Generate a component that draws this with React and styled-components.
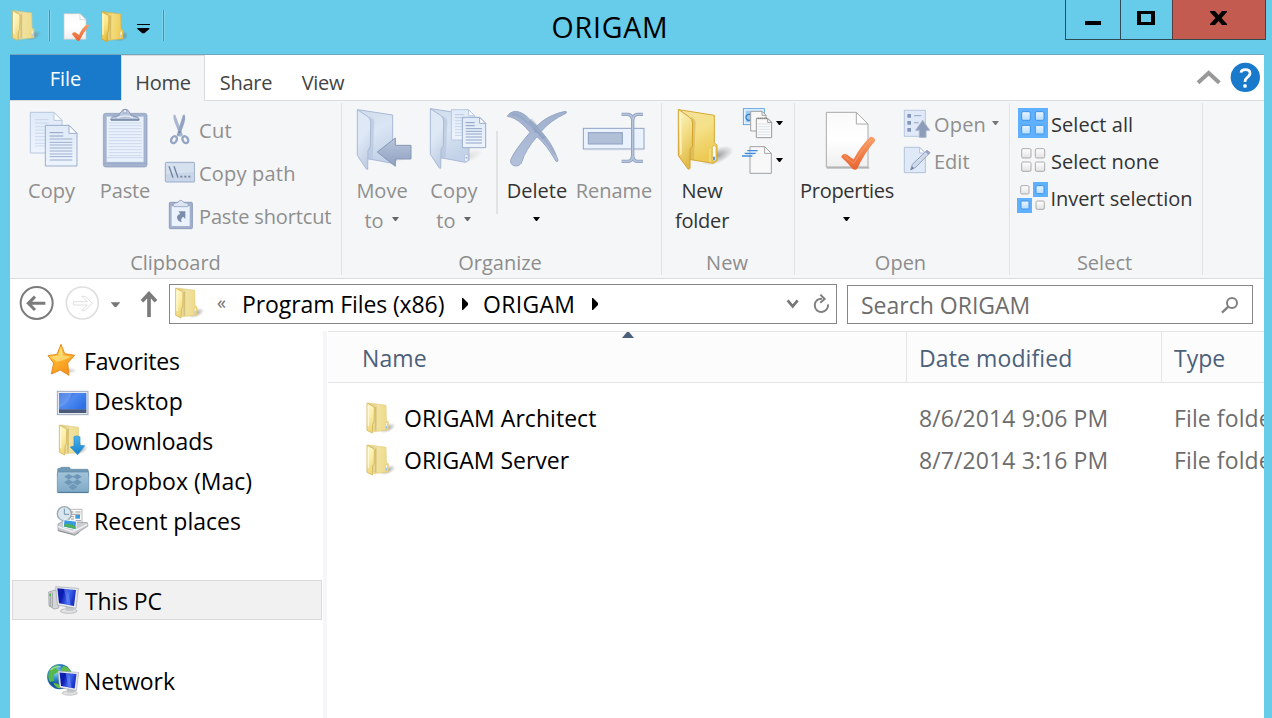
import React from "react";
import styled, { createGlobalStyle } from "styled-components";

const Global = createGlobalStyle`
  * { box-sizing: border-box; }
  body { margin: 0; overflow: hidden; background: #67cbea; font: 20px "Open Sans", "Noto Sans", sans-serif; color: #000; }
`;

/* ---------- frame ---------- */
const Window = styled.div`
  width: 1272px; height: 718px; background: #67cbea; overflow: hidden;
  display: flex; flex-direction: column;
`;
const TitleBar = styled.header`
  height: 54px; flex: none; display: flex; align-items: flex-start;
`;
const QuickAccess = styled.div`display: flex; width: 549px; height: 54px; padding-left: 11px;`;
const QuickSeparator = styled.i`
  width: 3px; height: 31px; margin-top: 10px; background: #4590ab; border: solid #7fd6f0; border-width: 0 1px;
`;
const Title = styled.div`
  width: 122px; text-align: center; font-size: 28.5px; line-height: 54px; letter-spacing: 0.8px; white-space: nowrap;
`;
const Controls = styled.div`
  margin-left: auto; margin-right: 6px; display: flex; height: 40px;
  border: solid #2e4a55; border-width: 0 1px 1px;
`;
const Control = styled.button`
  width: ${(p) => p.$w}px; padding: 0; border: 0; border-left: ${(p) => (p.$first ? 0 : 1)}px solid ${(p) => (p.$close ? "#5b3c3c" : "#2e4a55")};
  background: ${(p) => (p.$close ? "#c35b51" : "transparent")};
`;
const Client = styled.main`
  flex: 1; margin: 0 8px 0 10px; background: #fff; border-top: 1px solid #74a5bd;
  display: flex; flex-direction: column; min-height: 0; overflow: hidden;
`;

/* ---------- tabs ---------- */
const Tabs = styled.nav`
  height: 46px; flex: none; display: flex; border-bottom: 1px solid #dadbdc; color: #444;
`;
const FileTab = styled.div`
  width: 111px; height: 45px; background: #1979ca; color: #fff; text-align: center; line-height: 48px;
`;
const Tab = styled.div`
  width: ${(p) => p.$w}px; height: 46px; text-align: center; line-height: 55px; letter-spacing: -0.3px; margin-left: ${(p) => p.$ml || 0}px;
  ${(p) => p.$active && "background: #f5f6f7; border: solid #dadbdc; border-width: 1px 1px 0; line-height: 53px;"}
`;
const TabTools = styled.div`margin-left: auto; display: flex;`;

/* ---------- ribbon ---------- */
const Ribbon = styled.section`
  height: 178px; flex: none; display: flex; background: #f5f6f7; border-bottom: 1px solid #dadbdc; padding-top: 2px;
`;
const Group = styled.div`
  width: ${(p) => p.$w}px; height: 172px; border-right: 1px solid #e2e3e4; display: flex; flex-direction: column;
`;
const GroupBody = styled.div`height: 145px; flex: none; display: flex; padding-left: ${(p) => p.$pl}px;`;
const GroupLabel = styled.div`
  text-align: center; color: #8d8d8d; line-height: 30px; padding-right: ${(p) => p.$pr || 0}px;
`;
const BigButton = styled.div`
  width: ${(p) => p.$w}px; flex: none; display: flex; flex-direction: column; align-items: center;
  color: ${(p) => (p.$off ? "#8f8f8f" : "#333")}; line-height: 30px; letter-spacing: ${(p) => p.$ls || 0}px; white-space: nowrap;
  padding-top: 1px;
`;
const ButtonLine = styled.div`
  display: flex; align-items: center; height: 30px; gap: 8px;
  svg + & { margin-top: 2px; }
  svg { margin-bottom: 4px; }
`;
const SmallColumn = styled.div`display: flex; flex-direction: column; padding-top: ${(p) => p.$pt}px;`;
const SmallRow = styled.div`
  height: ${(p) => p.$h}px; display: flex; align-items: center; white-space: nowrap;
  color: ${(p) => (p.$off ? "#8f8f8f" : "#333")}; letter-spacing: ${(p) => p.$ls || 0}px;
`;
const SmallLabel = styled.span`margin-left: ${(p) => p.$ml}px; line-height: 30px;`;
const InnerSeparator = styled.i`width: 2px; height: 83px; background: #e1e2e4; margin: 28px 2px 0 7px;`;
const Art = styled.svg`display: block; flex: none;`;

/* ---------- address bar ---------- */
const AddressRow = styled.div`height: 52px; flex: none; display: flex;`;
const AddressBox = styled.div`
  width: 668px; height: 40px; margin: 5px 0 0 1px; border: 1px solid #868686; display: flex; align-items: center;
  font-size: 23px; line-height: 38px; white-space: nowrap;
`;
const Chevrons = styled.span`font-size: 18px; color: #6d6d6d; margin: -4px 15px 0 13px; width: 10px;`;
const Crumb = styled.span`width: ${(p) => p.$w}px; letter-spacing: ${(p) => p.$ls || 0}px;`;
const SearchBox = styled.div`
  width: 406px; height: 39px; margin: 6px 0 0 10px; border: 1px solid #868686; padding: 0 13px;
  display: flex; justify-content: space-between; align-items: center; font-size: 23px; line-height: 38px; color: #6d6d6d;
`;

/* ---------- body ---------- */
const Body = styled.div`flex: 1; display: flex; min-height: 0; min-width: 0;`;
const NavPane = styled.aside`
  width: 317px; flex: none; border-right: 4px solid #f5f6f7; padding: 9px 0 0 2px; font-size: 23px;
`;
const NavItem = styled.div`
  width: 310px; height: 40px; display: flex; padding-left: ${(p) => (p.$child ? 43 : 33)}px; margin-top: ${(p) => p.$mt || 0}px;
  ${(p) => p.$selected && "background: #f1f1f1; box-shadow: inset 0 0 0 1px #d9d9d9;"}
`;
const NavLabel = styled.span`
  margin-left: ${(p) => p.$ml ?? 2}px; line-height: 40px; padding-top: 1px; white-space: nowrap; letter-spacing: ${(p) => p.$ls || 0}px;
`;
const Files = styled.section`flex: 1; min-width: 0; overflow: hidden; margin-left: 1px;`;
const Columns = styled.div`
  display: grid; grid-template-columns: 579px 255px 103px; font-size: 23px; white-space: nowrap;
`;
const HeaderRow = styled(Columns)`
  height: 52px; border: solid #e5e5e5; border-width: 1px 0; background: #fcfcfc; color: #4c607a;
`;
const HeaderCell = styled.div`
  position: relative; border-right: 1px solid #e5e5e5; height: 50px; line-height: 53px; padding-left: ${(p) => p.$pl}px; letter-spacing: ${(p) => p.$ls || 0}px;
`;
const SortArrow = styled.svg`position: absolute; left: 294px; top: 0;`;
const FileList = styled.div`padding-top: 14px;`;
const FileRow = styled(Columns)`height: 42px; line-height: 42px;`;
const NameCell = styled.div`display: flex; align-items: center; padding-left: 38px;`;
const FileName = styled.span`margin-left: 8px; letter-spacing: ${(p) => p.$ls || 0}px;`;
const Cell = styled.div`color: #6d6d6d; padding-left: 12px; letter-spacing: ${(p) => p.$ls || 0}px;`;

/* ---------- shared drawing pieces ---------- */
const DefsSvg = styled.svg`position: absolute; width: 0; height: 0;`;
const grad = (id, stops, x2 = 0, y2 = 1) => (
  <linearGradient id={id} x1="0" y1="0" x2={x2} y2={y2}>
    {stops.map((c, i) => <stop key={i} offset={i / (stops.length - 1)} stopColor={c} />)}
  </linearGradient>
);
const Defs = () => (
  <DefsSvg>
    <defs>
      {grad("yBack", ["#f3e2a0", "#f5e188", "#ecca55"], 0.4)}
      {grad("yFlap", ["#fdf6c8", "#f3de86", "#e2bd4a"], 0.3)}
      {grad("yBackL", ["#d9c583", "#f0e2a0", "#efda88"], 1, 0.1)}
      {grad("yBackD", ["#d3b45a", "#f3dc80", "#efcc55"], 1, 0.1)}
      {grad("yFlapS", ["#fff8c4", "#fbeea6", "#efd77c"], 0.2)}
      {grad("yFlapD", ["#fff3b4", "#fae585", "#e6bf45"], 0.2)}
      {grad("gBack", ["#cfdbeb", "#dbe6f4", "#c3d2e8"], 0.4)}
      {grad("gFlap", ["#dfe9f6", "#dfe9f6", "#c3d0e5"], 0.3)}
      {grad("gDark", ["#b9c6dc", "#8fa0c0"])}
      {grad("gMid", ["#9fb0ce", "#b3c1da"])}
      {grad("gPage", ["#dfeaf8", "#edf4fe"])}
      {grad("wPage", ["#fafafa", "#ffffff", "#efefef"])}
      {grad("orange", ["#f9a06a", "#e9632f"])}
      {grad("scr", ["#1426a8", "#0a19b0", "#3d66ee", "#1a2fc4"], 1, 0.3)}
      {grad("desk", ["#2b62d6", "#4f8af0", "#2e70e6"], 1, 0.6)}
      {grad("star", ["#ffe66c", "#fcb32a", "#f6921e"], 0.6)}
      {grad("dl", ["#4bb5ee", "#1580cc"])}
      {grad("dbx", ["#a4c5da", "#7fa9c6"])}
      {grad("selB", ["#eaf5ff", "#b4dcff"])}
      {grad("selG", ["#ffffff", "#e2e2e2"])}
      <radialGradient id="shade"><stop offset="0" stopColor="#777" stopOpacity=".7" /><stop offset="1" stopColor="#777" stopOpacity="0" /></radialGradient>
      <radialGradient id="globe" cx=".35" cy=".3"><stop offset="0" stopColor="#9fdcf8" /><stop offset=".6" stopColor="#2a86d0" /><stop offset="1" stopColor="#14529c" /></radialGradient>
    </defs>
  </DefsSvg>
);

const SmallFolder = ({ dark }) => (
  <g>
    <ellipse cx="200" cy="452" rx="26" ry="13" transform="rotate(-22 200 452)" fill="url(#shade)" />
    <path d="M142 377 L196 384 L197 429 L203 433 V458 L158 463 Z" fill={dark ? "url(#yBackD)" : "url(#yBackL)"} stroke={dark ? "#dcb440" : "#e2cb78"} strokeWidth="2" />
    <path d="M165 388 V460" stroke="#b3954a" strokeWidth="5" opacity=".4" />
    <path d="M139 377 L157 387 Q161 389 161 394 L160 434 L156 440 L155 467 L139 459 Z" fill={dark ? "url(#yFlapD)" : "url(#yFlapS)"} stroke={dark ? "#cfa42e" : "#d4b65c"} strokeWidth="2.500" />
    <path d="M143 386 V446" stroke="#fffce8" strokeWidth="4" opacity=".8" />
    <rect x="194.500" y="436" width="5.500" height="19" rx="2" fill="#fff" stroke="#dcb944" strokeWidth="1.500" />
    <path d="M197.500 446 V454" stroke="#7fb2ea" strokeWidth="2.500" />
  </g>
);
const FolderIcon = ({ dark, w = 30 }) => (
  <Art width={w} height="33" viewBox={`136 374 ${w * 3} 99`}><SmallFolder dark={dark} /></Art>
);

const Down = ({ c = "#000", w = 8 }) => (
  <Art width={w} height="4" viewBox={`0 0 ${w} 4`}><path d="M0 0H7L4 4H3Z" fill={c} /></Art>
);

/* folded-corner page */
const Page = ({ x, y, w, h, f = 24, fill = "url(#gPage)", stroke = "#a9b9d4", fold = "#fff", sw = 3 }) => (
  <g strokeWidth={sw} stroke={stroke}>
    <path d={`M${x} ${y}H${x + w - f}L${x + w} ${y + f}V${y + h}H${x}Z`} fill={fill} />
    <path d={`M${x + w - f} ${y}V${y + f}H${x + w}Z`} fill={fold} strokeLinejoin="round" />
  </g>
);
const Lines = ({ x, x2, ys, c = "#9aa9c6", sw = 3 }) => (
  <path d={ys.map((y) => `M${x} ${y}H${x2}`).join("")} stroke={c} strokeWidth={sw} />
);

/* ---------- big ribbon icons ---------- */
const CopyArt = () => (
  <Art width="73" height="70" viewBox="15 12 219 210">
    <Page x={61} y={37} w={95} h={122} stroke="#b8c8e0" />
    <Lines x={75} x2={116} ys={[59, 69]} c="#c9d6e8" />
    <Lines x={75} x2={140} ys={[80, 90, 100, 110, 120, 130, 138]} c="#cddaec" />
    <Page x={106} y={76} w={95} h={122} stroke="#9badcc" />
    <Lines x={119} x2={160} ys={[98, 108]} c="#8fa0c2" />
    <Lines x={119} x2={187} ys={[117, 127, 135, 144, 153, 162, 170, 180]} c="#9cadcc" />
  </Art>
);
const PasteArt = () => (
  <Art width="74" height="70" viewBox="234 12 222 210">
    <rect x="280" y="40" width="131" height="161" rx="7" fill="#a5b3cf" stroke="#8a9bbd" strokeWidth="2" />
    <path d="M281 190H410" stroke="#8fa0c0" strokeWidth="2" />
    <rect x="290" y="50" width="111" height="136" fill="#e9f1fc" stroke="#bccbe1" strokeWidth="1.500" />
    <Lines x={296} x2={395} ys={[69, 77, 86, 95, 104, 113, 122, 131, 140, 149, 158, 167]} c="#c6d4e7" sw={2.5} />
    <path d="M291 173H400" stroke="#b9c9df" strokeWidth="2" />
    <path d="M302 60Q302 50 316 49L326 47Q328 39 334 35A12 10 0 0 1 357 35Q361 42 366 48L378 50Q388 52 388 60Z" fill="#b8c4da" stroke="#7f90b2" strokeWidth="2.500" />
    <circle cx="345" cy="34" r="5" fill="#f5f6f7" stroke="#7f90b2" strokeWidth="2" />
    <path d="M303 60H387" stroke="#73859f" strokeWidth="4" />
    <path d="M322 53Q345 42 370 53" stroke="#e7eef8" strokeWidth="4" fill="none" />
  </Art>
);
const GhostFolder = ({ dx = 0, dy = 0 }) => (
  <g transform={`translate(${dx} ${dy})`}>
    <ellipse cx="168" cy="172" rx="46" ry="18" transform="rotate(-20 168 172)" fill="url(#shade)" opacity=".25" />
    <path d="M53 29L158 45V131L168 138V183L158 190L82 176Z" fill="url(#gBack)" stroke="#a9bad6" strokeWidth="3" />
    <path d="M88 50Q102 55 103 68L98 180L84 178Z" fill="#b3c2da" opacity=".6" />
    <path d="M52 29L84 50Q92 56 92 66L91 140L84 152L83 208L79 207L52 166Z" fill="url(#gFlap)" stroke="#a9bad6" strokeWidth="3" />
  </g>
);
const MoveToArt = () => (
  <Art width="74" height="70" viewBox="15 12 222 210">
    <GhostFolder />
    <path d="M112 156L166 114V136H213V177H166V199Z" fill="url(#gDark)" stroke="#8797b6" strokeWidth="3" strokeLinejoin="round" />
  </Art>
);
const CopyToArt = () => (
  <Art width="70" height="70" viewBox="237 12 210 210">
    <GhostFolder dx={219} dy={-3} />
    <Page x={334} y={29} w={70} h={91} f={18} stroke="#b8c8e0" />
    <Lines x={345} x2={372} ys={[44, 53]} c="#bccade" />
    <Lines x={345} x2={392} ys={[62, 71, 80, 89, 98, 106]} c="#cad7e9" />
    <Page x={367} y={52} w={70} h={91} f={18} stroke="#98abcb" />
    <Lines x={377} x2={404} ys={[68, 77]} c="#8c9ec0" />
    <Lines x={377} x2={426} ys={[86, 94, 102, 111, 120, 129]} c="#92a4c5" />
    <rect x="374" y="164" width="10" height="20" rx="3" fill="#f2f6fc" stroke="#a9bad6" strokeWidth="2" />
    <circle cx="379" cy="173" r="3" fill="#a3b4d0" />
  </Art>
);
const DeleteArt = () => (
  <Art width="74" height="70" viewBox="480 12 222 210">
    <path d="M502 49Q508 36 527 34Q550 36 570 59Q580 69 590 78Q625 44 675 34Q682 34 678 40Q630 62 603 95Q634 124 654 180Q655 186 648 184Q622 137 591 110Q556 150 546 184Q543 197 527 198Q510 196 512 180Q520 156 570 97Q545 67 524 56Q512 50 502 49Z" fill="url(#gMid)" stroke="#99a9c6" strokeWidth="3" />
    <path d="M515 42Q540 43 563 69Q590 95 612 116Q632 138 645 165" stroke="#8799ba" strokeWidth="7" opacity=".35" fill="none" />
    <path d="M570 60Q590 78 590 92Q600 92 612 116" stroke="#7c8eb0" strokeWidth="14" opacity=".3" fill="none" />
  </Art>
);
const RenameArt = () => (
  <Art width="80" height="70" viewBox="702 12 240 210">
    <rect x="730" y="85" width="182" height="62" fill="#e9f2fe" stroke="#8fa3c5" strokeWidth="3" />
    <path d="M732 149H911" stroke="#c9d0dc" strokeWidth="3" />
    <rect x="745" y="98" width="102" height="34" fill="#b2c0d7" stroke="#8ea0c0" strokeWidth="3" />
    <path d="M845 43H864Q877 45 878 61V166Q877 184 864 184H845M909 43H892Q879 45 878 61M878 166Q879 184 892 184H909" fill="none" stroke="#8a9dbe" strokeWidth="10" />
    <path d="M845 43H864Q877 45 878 61V166Q877 184 864 184H845M909 43H892Q879 45 878 61M878 166Q879 184 892 184H909" fill="none" stroke="#b7c5db" strokeWidth="5" />
  </Art>
);
const NewFolderArt = () => (
  <Art width="74" height="70" viewBox="15 12 222 210">
    <ellipse cx="172" cy="167" rx="52" ry="23" transform="rotate(-24 172 167)" fill="url(#shade)" />
    <path d="M56 29L163 46V128L171 136V182L160 190L86 178Z" fill="url(#yBack)" stroke="#d8a832" strokeWidth="3" />
    <path d="M93 50Q107 56 107 68L102 180L88 180Z" fill="#c9a64c" opacity=".45" />
    <path d="M55 28L88 51Q98 58 98 69L97 139L90 148L90 205L85 208L55 167Z" fill="url(#yFlap)" stroke="#d3a22c" strokeWidth="3" />
    <path d="M61 42L63 164" stroke="#fff9d6" strokeWidth="5" opacity=".7" />
    <path d="M150 146V187" stroke="#fff2a6" strokeWidth="3" opacity=".7" />
    <rect x="157" y="137" width="11" height="47" rx="5" fill="#fff" stroke="#dcb13c" strokeWidth="2.500" />
    <rect x="159" y="170" width="6" height="11" fill="#5b9be4" />
  </Art>
);
const PropertiesArt = () => (
  <Art width="98" height="70" viewBox="414 12 294 210">
    <path d="M500 203H626V204H502Z" stroke="#bdbdbd" strokeWidth="4" />
    <Page x={499} y={37} w={125} h={164} f={35} fill="url(#wPage)" stroke="#aaaaaa" />
    <path d="M544 172Q544 163 555 162L562 164Q572 172 581 178Q600 141 630 111Q640 108 645 118V123Q615 157 591 207Q586 212 578 207Q560 186 544 172Z" fill="url(#orange)" />
    <path d="M552 168Q570 182 581 190Q604 149 636 116" stroke="#ffb489" strokeWidth="3" opacity=".5" fill="none" />
  </Art>
);

/* ---------- small ribbon icons ---------- */
const CutArt = () => (
  <Art width="33" height="43" viewBox="456 27 99 129">
    <path d="M491 44Q496 42 498 50L519 106L511 110L497 75Q488 54 491 44Z" fill="#a9b7cf" />
    <path d="M524 44Q519 42 517 50L500 106L508 110L521 75Q528 54 524 44Z" fill="#93a3c1" />
    <ellipse cx="492" cy="119" rx="8" ry="11" transform="rotate(30 492 119)" fill="none" stroke="#94a5c3" strokeWidth="7" />
    <ellipse cx="526" cy="119" rx="8" ry="11" transform="rotate(-30 526 119)" fill="none" stroke="#94a5c3" strokeWidth="7" />
    <circle cx="509" cy="96" r="3" fill="#71829f" />
  </Art>
);
const CopyPathArt = () => (
  <Art width="33" height="43" viewBox="456 156 99 129">
    <rect x="466" y="187" width="88" height="59" rx="3" fill="#c9d5e8" stroke="#9aabcb" strokeWidth="3" />
    <path d="M469 190H551V216L469 222Z" fill="#dbe5f3" opacity=".7" />
    <path d="M477 199L489 233M492 199L504 233" stroke="#71829f" strokeWidth="4" />
    <path d="M511 230H517M523 230H529M535 230H541" stroke="#71829f" strokeWidth="5" />
  </Art>
);
const PasteShortcutArt = () => (
  <Art width="33" height="43" viewBox="456 285 99 129">
    <rect x="478" y="307" width="69" height="79" rx="3" fill="#a3b1cd" stroke="#8c9cbc" strokeWidth="3" />
    <rect x="485" y="319" width="54" height="59" fill="#eaf2fd" />
    <path d="M489 314Q494 307 503 308Q506 301 512 301T522 308Q531 307 536 314L532 320H493Z" fill="#dce5f1" stroke="#93a3c0" strokeWidth="2.500" />
    <path d="M505 334H526V357L519 350Q511 357 515 367Q500 362 501 350Q503 343 511 342Z" fill="#7c8dac" />
  </Art>
);
const NewItemArt = () => (
  <Art width="36" height="37" viewBox="237 18 108 111">
    <rect x="250" y="26" width="63" height="48" fill="#e4f3ff" stroke="#4b98dc" strokeWidth="2.500" />
    <rect x="257" y="32" width="49" height="35" fill="#9ecbf2" />
    <path d="M271 44A9 9 0 1 0 271 60" fill="none" stroke="#2f7cc6" strokeWidth="4" />
    <Page x={272} y={34} w={46} h={59} f={12} fill="#f8f8f8" stroke="#a2a2a2" />
    <Page x={289} y={55} w={46} h={58} f={12} fill="#fafafa" stroke="#9b9b9b" />
    <path d="M293 55H322" stroke="#777" strokeWidth="5" strokeDasharray="3 3" />
    <Lines x={293} x2={331} ys={[72, 80, 88, 96, 104]} c="#d5dee5" sw={2.5} />
  </Art>
);
const EasyAccessArt = () => (
  <Art width="36" height="37" viewBox="237 129 108 111">
    <Page x={270} y={140} w={64} h={80} f={20} fill="#f8f8f8" stroke="#a2a2a2" />
    <path d="M262 152H293M254 160H287M246 168H277" stroke="#3f8cdc" strokeWidth="4" />
    <path d="M268 156H290M258 164H282" stroke="#b5d7f5" strokeWidth="2" />
  </Art>
);
const OpenArt = () => (
  <Art width="30" height="37" viewBox="726 18 90 111">
    <rect x="733" y="31" width="63" height="78" fill="#dfe9f7" stroke="#b9c7de" strokeWidth="3" />
    <path d="M742 42H753V53H742ZM742 63H753V74H742ZM742 84H753V95H742Z" fill="#8496b8" />
    <path d="M762 47H784M762 68H776" stroke="#a3b3cf" strokeWidth="4" />
    <path d="M788 61L809 91H798V112H778V91H767Z" fill="#8c9cb9" stroke="#a4b2ca" strokeWidth="3" />
  </Art>
);
const EditArt = () => (
  <Art width="30" height="37" viewBox="726 129 90 111">
    <Page x={733} y={142} w={63} h={76} f={17} stroke="#b4c3dc" fill="#dfe9f8" />
    <path d="M752 210L757 193L801 151L810 158L768 201Z" fill="#cfdaea" stroke="#93a3bf" strokeWidth="3" />
    <path d="M796 155L801 151L810 158L805 164Z" fill="#93a3bf" />
    <path d="M752 210L756 199L762 205Z" fill="#6c7b98" />
  </Art>
);
const SelBox = ({ x, y, s = 26, on }) => (
  <rect x={x} y={y} width={s} height={s} rx="4" fill={on ? "url(#selB)" : "url(#selG)"} stroke={on ? "#3e94e8" : "#ababab"} strokeWidth="3" />
);
const SelectAllArt = () => (
  <Art width="36" height="37" viewBox="42 168 108 111">
    <rect x="54" y="174" width="90" height="90" fill="#5fb0ff" />
    {[65, 106].map((x) => [185, 226].map((y) => <SelBox key={`${x}-${y}`} x={x} y={y} on />))}
  </Art>
);
const SelectNoneArt = () => (
  <Art width="36" height="37" viewBox="42 279 108 111">
    {[65, 106].map((x) => [296, 336].map((y) => <SelBox key={`${x}-${y}`} x={x} y={y} s={28} />))}
  </Art>
);
const InvertArt = () => (
  <Art width="36" height="37" viewBox="42 390 108 111">
    <path d="M99 396H144V441H99ZM51 444H96V489H51Z" fill="#5fb0ff" />
    <SelBox x={62} y={407} s={25} /><SelBox x={108} y={407} s={24} on />
    <SelBox x={63} y={453} s={24} on /><SelBox x={108} y={453} s={25} />
  </Art>
);

/* ---------- navigation pane icons ---------- */
const NavArt = ({ vb, children }) => <Art width="37" height="40" viewBox={vb}>{children}</Art>;
const StarArt = () => (
  <NavArt vb="135 195 111 120">
    <ellipse cx="205" cy="287" rx="26" ry="10" fill="url(#shade)" opacity=".6" />
    <path d="M183 208L194 236L224 241L203 264L207 301L181 285L154 297L161 264L144 242L171 238Z" fill="url(#star)" stroke="#e98b1f" strokeWidth="3" strokeLinejoin="round" />
    <path d="M183 217L190 241L214 245L190 256L170 260L152 245L174 242Z" fill="#fff3a0" opacity=".55" />
  </NavArt>
);
const DesktopArt = () => (
  <NavArt vb="165 0 111 120">
    <rect x="172" y="34" width="92" height="70" fill="#e4e8f0" stroke="#a0a9bd" strokeWidth="3" />
    <rect x="177" y="39" width="82" height="50" fill="url(#desk)" />
    <path d="M177 39H215Q208 70 177 84Z" fill="#9cc0fa" opacity=".35" />
    <rect x="177" y="88" width="82" height="11" fill="#4b5a78" />
  </NavArt>
);
const DownloadsArt = () => (
  <NavArt vb="165 120 111 120">
    <g transform="translate(39 -242)"><SmallFolder /></g>
    <path d="M222 170Q232 165 240 171V196L254 197L233 224L211 201L222 198Z" fill="url(#dl)" stroke="#2c8dd0" strokeWidth="2" />
  </NavArt>
);
const DropboxArt = () => (
  <NavArt vb="165 240 111 120">
    <path d="M173 280V268Q173 265 177 265H180L183 262H208L212 268H261Q265 268 265 272V290H173Z" fill="#7099b5" stroke="#5c86a4" strokeWidth="2" />
    <rect x="172" y="276" width="94" height="62" rx="3" fill="url(#dbx)" stroke="#5e88a6" strokeWidth="2" />
    <path d="M206 283L219 290L206 298L194 290ZM232 283L244 290L232 298L219 290ZM206 299L219 307L206 315L194 307ZM232 299L244 307L232 315L219 307ZM219 313L231 321L219 329L207 321Z" fill="#6f98b8" stroke="#5683a6" strokeWidth="1" />
    <path d="M173 337H265" stroke="#4d7693" strokeWidth="3" />
  </NavArt>
);
const RecentArt = () => (
  <NavArt vb="165 360 111 120">
    <path d="M208 388H246V432H208Z" fill="#fafafa" stroke="#999" strokeWidth="2" />
    <path d="M213 396H221M226 396H242M213 403H241M213 410H222M213 417H222M226 422H243" stroke="#888" strokeWidth="2.500" />
    <rect x="226" y="405" width="14" height="11" fill="#3d9bdc" />
    <path d="M174 432L188 424L262 428L264 438L224 464L174 452Z" fill="#c9ccd0" stroke="#8b8f94" strokeWidth="2" />
    <path d="M174 440L218 455L262 433" stroke="#f2f2f2" strokeWidth="4" fill="none" />
    <circle cx="193" cy="401" r="21" fill="#dbe7ee" stroke="#98a9b4" strokeWidth="4" />
    <path d="M193 386V403H207" stroke="#6f93ac" strokeWidth="3" fill="none" />
    <path d="M192 419L230 424L227 449L190 441Z" fill="#3698e0" stroke="#f8f8f8" strokeWidth="3" />
    <path d="M193 434Q208 426 227 440V447L191 439Z" fill="#4fae5b" />
    <path d="M176 452L224 466L238 457" stroke="#777" strokeWidth="2" fill="none" />
  </NavArt>
);
const Monitor = () => (
  <g>
    <ellipse cx="206" cy="153" rx="25" ry="7" fill="#e2e2e2" stroke="#a9a9a9" strokeWidth="2" />
    <path d="M196 138L222 142L219 152H198Z" fill="#c3c7cb" />
    <path d="M167 80L235 85L228 145L172 135Z" fill="#e9ebed" stroke="#a0a4a8" strokeWidth="2" />
    <path d="M172 85L228 90L222 138L177 130Z" fill="url(#scr)" />
    <path d="M192 87L204 88L212 136L202 134Z" fill="#7c9cff" opacity=".45" />
  </g>
);
const ThisPcArt = () => (
  <NavArt vb="135 60 111 120">
    <path d="M146 96L165 90L176 94V144L163 147L147 138Z" fill="#d4d7da" stroke="#94989c" strokeWidth="2" />
    <path d="M151 98V140M157 97V142" stroke="#82868a" strokeWidth="2" />
    <rect x="148" y="102" width="5" height="6" fill="#42c443" />
    <Monitor />
  </NavArt>
);
const NetworkArt = () => (
  <NavArt vb="135 300 111 120">
    <circle cx="179" cy="350" r="37" fill="url(#globe)" stroke="#2a6db0" strokeWidth="1.500" />
    <path d="M148 332Q160 314 178 314L168 325L178 333L160 345L163 362L150 366Q141 352 148 332Z" fill="#55b94a" />
    <path d="M190 317Q208 322 214 338L200 334L190 340L184 328ZM160 368L175 372L180 385Q166 384 160 368Z" fill="#62bd45" />
    <path d="M152 330Q165 318 182 320" stroke="#d8f6d2" strokeWidth="4" opacity=".6" fill="none" />
    <g transform="translate(22 260) scale(.91)"><Monitor /></g>
  </NavArt>
);

/* ---------- data ---------- */
const favorites = [
  ["Desktop", DesktopArt, 0], ["Downloads", DownloadsArt, -0.1],
  ["Dropbox (Mac)", DropboxArt, 0], ["Recent places", RecentArt, 0],
];
const files = [
  { name: "ORIGAM Architect", ls: 0.05, date: "8/6/2014 9:06 PM" },
  { name: "ORIGAM Server", ls: 0, date: "8/7/2014 3:16 PM" },
];

const Big = ({ w, art: A, off, ls, line1, line2, arrow }) => (
  <BigButton $w={w} $off={off} $ls={ls}>
    <A />
    <ButtonLine>{line1}</ButtonLine>
    <ButtonLine>{line2}{arrow && <Down c={off ? "#666" : "#000"} />}</ButtonLine>
  </BigButton>
);
const Small = ({ h, art: A, off, ls, ml, label }) => (
  <SmallRow $h={h} $off={off} $ls={ls}><A /><SmallLabel $ml={ml}>{label}</SmallLabel></SmallRow>
);
const MenuSlot = styled.span`margin-left: ${(p) => p.$ml}px; padding-bottom: 3px;`;

export default function App() {
  return (
    <>
      <Global />
      <Defs />
      <Window>
        <TitleBar>
          <QuickAccess>
            <Art width="37" height="54" viewBox="33 0 111 162"><g transform="translate(-101 -345)"><SmallFolder /></g></Art>
            <QuickSeparator />
            <Art width="43" height="54" viewBox="153 0 129 162">
              <Page x={192} y={41} w={66} h={77} f={18} fill="url(#wPage)" stroke="#c9c9c9" sw={2} />
              <path d="M216 103Q217 95 226 97L237 105Q246 84 261 73Q268 72 266 80Q248 99 239 121Q234 125 230 120Z" fill="url(#orange)" />
            </Art>
            <Art width="33" height="54" viewBox="282 0 99 162"><g transform="translate(166 -342)"><SmallFolder dark /></g></Art>
            <Art width="35" height="54" viewBox="381 0 105 162"><path d="M411 72H450V75H411ZM412 84H448V87L433 100H427L412 87Z" /></Art>
            <QuickSeparator />
          </QuickAccess>
          <Title>ORIGAM</Title>
          <Controls>
            <Control $w={54} $first aria-label="Minimize"><Art width="54" height="39" viewBox="0 0 54 39"><path d="M19 21h16v4h-16z" /></Art></Control>
            <Control $w={52} aria-label="Maximize"><Art width="51" height="39" viewBox="0 0 51 39"><path d="M16 11h18v14h-18zM20 14v8h10v-8z" fillRule="evenodd" /></Art></Control>
            <Control $w={93} $close aria-label="Close"><Art width="92" height="39" viewBox="1 0 92 39"><path d="M38 11h5l3.500 4l3.500-4h5v1l-5.500 6l5.500 6v1h-5l-3.500-4l-3.500 4h-5v-1l5.500-6l-5.500-6z" /></Art></Control>
          </Controls>
        </TitleBar>

        <Client>
          <Tabs>
            <FileTab>File</FileTab>
            <Tab $w={84} $active>Home</Tab>
            <Tab $w={60} $ml={11}>Share</Tab>
            <Tab $w={52} $ml={21}>View</Tab>
            <TabTools>
              <Art width="72" height="45" viewBox="576 15 216 135">
                <path d="M594 98L626 69L658 98" fill="none" stroke="#999" strokeWidth="12" />
                <circle cx="736" cy="82" r="44" fill="#1979ca" />
                <path d="M723 68Q724 59 736 59Q750 59 750 70Q750 77 742 82Q735 87 735 96" fill="none" stroke="#fff" strokeWidth="8" />
                <rect x="730" y="103" width="10" height="10" rx="3" fill="#fff" />
              </Art>
            </TabTools>
          </Tabs>

          <Ribbon>
            <Group $w={332}>
              <GroupBody $pl={5}>
                <Big w={73} art={CopyArt} off line1="Copy" />
                <Big w={74} art={PasteArt} off ls={-0.1} line1="Paste" />
                <SmallColumn $pt={6}>
                  <Small h={43} art={CutArt} off ls={0.3} ml={4} label="Cut" />
                  <Small h={43} art={CopyPathArt} off ls={0.2} ml={4} label="Copy path" />
                  <Small h={43} art={PasteShortcutArt} off ls={-0.15} ml={4} label="Paste shortcut" />
                </SmallColumn>
              </GroupBody>
              <GroupLabel>Clipboard</GroupLabel>
            </Group>
            <Group $w={320}>
              <GroupBody $pl={3}>
                <Big w={74} art={MoveToArt} off line1="Move" line2="to" arrow />
                <Big w={70} art={CopyToArt} off ls={0.1} line1="Copy" line2="to" arrow />
                <InnerSeparator />
                <Big w={74} art={DeleteArt} line1="Delete" arrow />
                <Big w={80} art={RenameArt} off line1="Rename" />
              </GroupBody>
              <GroupLabel $pr={3}>Organize</GroupLabel>
            </Group>
            <Group $w={133}>
              <GroupBody $pl={3}>
                <Big w={74} art={NewFolderArt} ls={-0.2} line1="New" line2="folder" />
                <SmallColumn $pt={3}>
                  <SmallRow $h={37}><NewItemArt /><MenuSlot $ml={1}><Down /></MenuSlot></SmallRow>
                  <SmallRow $h={37}><EasyAccessArt /><MenuSlot $ml={1}><Down /></MenuSlot></SmallRow>
                </SmallColumn>
              </GroupBody>
              <GroupLabel $pr={2}>New</GroupLabel>
            </Group>
            <Group $w={215}>
              <GroupBody $pl={3}>
                <Big w={98} art={PropertiesArt} ls={-0.3} line1="Properties" arrow />
                <SmallColumn $pt={3}>
                  <SmallRow $h={37} $off $ls={0.2}>
                    <OpenSlot><OpenArt /></OpenSlot><SmallLabel $ml={1}>Open</SmallLabel><MenuSlot $ml={6}><Down c="#777" /></MenuSlot>
                  </SmallRow>
                  <SmallRow $h={37} $off>
                    <OpenSlot><EditArt /></OpenSlot><SmallLabel $ml={1}>Edit</SmallLabel>
                  </SmallRow>
                </SmallColumn>
              </GroupBody>
              <GroupLabel $pr={3}>Open</GroupLabel>
            </Group>
            <Group $w={193}>
              <GroupBody $pl={4}>
                <SmallColumn $pt={3}>
                  <Small h={37} art={SelectAllArt} ls={0.05} ml={1} label="Select all" />
                  <Small h={37} art={SelectNoneArt} ml={1} label="Select none" />
                  <Small h={37} art={InvertArt} ls={-0.05} ml={0.5} label="Invert selection" />
                </SmallColumn>
              </GroupBody>
              <GroupLabel $pr={3}>Select</GroupLabel>
            </Group>
          </Ribbon>

          <AddressRow>
            <Art width="158" height="52" viewBox="30 12 474 156">
              <circle cx="110" cy="84" r="48" fill="none" stroke="#7b7b7b" strokeWidth="6" />
              <path d="M136 85H90M105 65L85 85L105 105" fill="none" stroke="#7b7b7b" strokeWidth="9" />
              <circle cx="247" cy="84" r="48" fill="none" stroke="#dfdfdf" strokeWidth="5" />
              <path d="M220 80H262L246 64H255L277 85L255 106H246L262 90H220Z" fill="#fff" stroke="#dfdfdf" strokeWidth="3" />
              <path d="M332 82H361L349 96H344Z" fill="#777" />
              <path d="M447 126V57M426 79L447 56L468 79" fill="none" stroke="#7b7b7b" strokeWidth="11" />
            </Art>
            <AddressBox>
              <Art width="34" height="38" viewBox="510 31 102 114"><g transform="translate(388 -337)"><SmallFolder /></g></Art>
              <Chevrons>«</Chevrons>
              <Crumb $w={220} $ls={-0.1}>Program Files (x86)</Crumb>
              <Art width="21" height="38" viewBox="0 0 21 38"><path d="M0 13H1L6 18V20L1 25H0Z" /></Art>
              <Crumb $w={109} $ls={0.3}>ORIGAM</Crumb>
              <Art width="20" height="38" viewBox="0 0 20 38"><path d="M0 13H1L6 18V20L1 25H0Z" /></Art>
              <Art width="224" height="38" viewBox="-447 31 672 114">
                <path d="M80 77L95 95L110 77" fill="none" stroke="#777" strokeWidth="8" />
                <path d="M183 72A20 20 0 1 0 201 89" fill="none" stroke="#808080" strokeWidth="6" />
                <path d="M178 60L191 73L178 84" fill="none" stroke="#808080" strokeWidth="6" />
              </Art>
            </AddressBox>
            <SearchBox>
              Search ORIGAM
              <Art width="18" height="38" viewBox="1384 33 54 114"><circle cx="1417" cy="84" r="15" fill="none" stroke="#808080" strokeWidth="6" /><path d="M1406 95L1387 113" stroke="#808080" strokeWidth="7" /></Art>
            </SearchBox>
          </AddressRow>

          <Body>
            <NavPane>
              <NavItem><StarArt /><NavLabel $ls={-0.15}>Favorites</NavLabel></NavItem>
              {favorites.map(([label, A, ls]) => (
                <NavItem $child key={label}><A /><NavLabel $ls={ls}>{label}</NavLabel></NavItem>
              ))}
              <NavItem $mt={40} $selected><ThisPcArt /><NavLabel $ml={3} $ls={-0.15}>This PC</NavLabel></NavItem>
              <NavItem $mt={40}><NetworkArt /><NavLabel $ls={-0.1}>Network</NavLabel></NavItem>
            </NavPane>
            <Files>
              <HeaderRow>
                <HeaderCell $pl={34} $ls={0.1}>Name<SortArrow width="12" height="6" viewBox="0 0 12 6"><path d="M0 6L5 0H7L12 6Z" fill="#4c607a" /></SortArrow></HeaderCell>
                <HeaderCell $pl={12} $ls={0.1}>Date modified</HeaderCell>
                <HeaderCell $pl={12}>Type</HeaderCell>
              </HeaderRow>
              <FileList>
                {files.map((f) => (
                  <FileRow key={f.name}>
                    <NameCell><FolderIcon /><FileName $ls={f.ls}>{f.name}</FileName></NameCell>
                    <Cell $ls={0.1}>{f.date}</Cell>
                    <Cell $ls={0.1}>File folder</Cell>
                  </FileRow>
                ))}
              </FileList>
            </Files>
          </Body>
        </Client>
      </Window>
    </>
  );
}

const OpenSlot = styled.span`margin-left: 6px; & + span + span { flex: none; } margin-right: 1px;`;
